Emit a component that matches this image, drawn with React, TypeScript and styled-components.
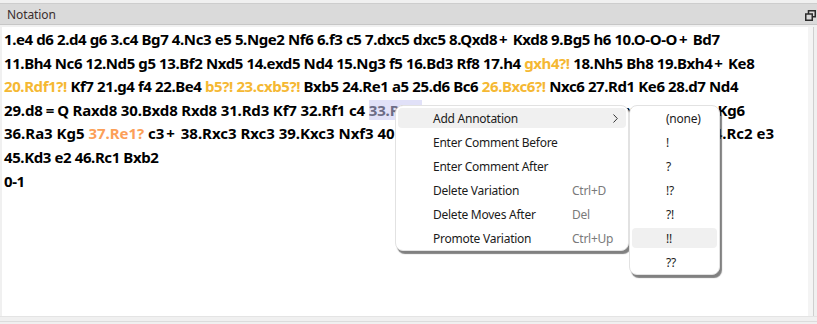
import styled, { createGlobalStyle } from "styled-components";
import { Fragment } from "react";

const GlobalStyle = createGlobalStyle`
  html, body {
    margin: 0;
    padding: 0;
    background: #f0f0f0;
  }
  body {
    font-family: "Noto Sans", "Open Sans", sans-serif;
  }
`;

const Panel = styled.div`
  position: relative;
  width: 817px;
  height: 324px;
  display: flex;
  flex-direction: column;
  background: #f0f0f0;
  overflow: hidden;
`;

const TitleBar = styled.div`
  margin-top: 3px;
  height: 20px;
  background: #dadada;
  border-top: 1px solid #cdcdcd;
  border-bottom: 1px solid #c6c6c6;
  display: flex;
  align-items: center;
  justify-content: space-between;
  padding: 0 1px 0 7px;
`;

const Title = styled.span`
  font-family: "Noto Sans", sans-serif;
  font-size: 12px;
  letter-spacing: -0.1px;
  color: #3b2e2e;
`;

const FloatButton = styled.svg`
  width: 11px;
  height: 11px;
  margin-top: 2px;
`;

const Content = styled.div`
  margin: 2px 3px 0 2px;
  height: 289px;
  background: #fff;
  border-right: 1px solid #cfcfcf;
  position: relative;
  display: flex;
`;

const Moves = styled.div`
  flex: 1;
  padding: 1px 0 0 2px;
`;

const ScrollStrip = styled.div`
  width: 5px;
  background: #f4f4f4;
`;

const Line = styled.div<{ $tracking?: number }>`
  font-family: "Noto Sans", sans-serif;
  font-weight: 700;
  font-size: 15px;
  letter-spacing: ${(p) => p.$tracking ?? -0.4}px;
  line-height: 23.6px;
  white-space: nowrap;
  color: #000;
`;

// Segoe-style "+" and "=" sit wider than Noto's
const Sym = styled.span<{ $wide?: boolean }>`
  margin: 0 ${(p) => (p.$wide ? 3 : 2)}px;
`;

const Move = styled.span<{ $tone?: "dubious" | "mistake" | "selected" }>`
  color: ${(p) =>
    p.$tone === "dubious"
      ? "#f5b833"
      : p.$tone === "mistake"
      ? "#fc9f58"
      : p.$tone === "selected"
      ? "#6c6c86"
      : "#000"};
  background: ${(p) => (p.$tone === "selected" ? "#e1e1f8" : "transparent")};
`;

const Footer = styled.div`
  flex: 1;
  border-top: 1px solid #e4e4e4;
  background: #f0f0f0;
  position: relative;
  &::after {
    content: "";
    position: absolute;
    left: 0;
    right: 0;
    top: 4px;
    border-top: 1px solid #dcdcdc;
  }
`;

const Menu = styled.div<{ $left: number; $top: number; $width: number }>`
  position: absolute;
  left: ${(p) => p.$left}px;
  top: ${(p) => p.$top}px;
  width: ${(p) => p.$width}px;
  box-sizing: border-box;
  padding: 2px 2px;
  background: #fff;
  border: 1px solid #e2e2e2;
  border-radius: 8px;
  box-shadow: 2px 3px 1px rgba(60, 60, 60, 0.65);
  display: flex;
  flex-direction: column;
  gap: 4px;
  font-family: "Noto Sans", sans-serif;
  font-size: 12px;
  letter-spacing: -0.25px;
  color: #1b1b1b;
`;

const Item = styled.div<{ $active?: boolean; $indent: number }>`
  height: 20px;
  display: flex;
  align-items: center;
  padding-left: ${(p) => p.$indent}px;
  border-radius: 4px;
  background: ${(p) => (p.$active ? "#f0f0f0" : "transparent")};
  position: relative;
`;

const Label = styled.span`
  width: 139px;
`;

const Shortcut = styled.span`
  color: #7a7a7a;
`;

const Arrow = styled.svg`
  position: absolute;
  right: 8px;
  top: 6px;
  width: 5px;
  height: 9px;
`;

const menuItems = [
  { label: "Add Annotation", shortcut: "", sub: true },
  { label: "Enter Comment Before", shortcut: "" },
  { label: "Enter Comment After", shortcut: "" },
  { label: "Delete Variation", shortcut: "Ctrl+D" },
  { label: "Delete Moves After", shortcut: "Del" },
  { label: "Promote Variation", shortcut: "Ctrl+Up" },
];

const annotations = ["(none)", "!", "?", "!?", "?!", "!!", "??"];

function san(text: string) {
  return text.split(/([+=])/).map((part, i) =>
    part === "+" || part === "=" ? (
      <Sym key={i} $wide={part === "="}>
        {part}
      </Sym>
    ) : (
      <Fragment key={i}>{part}</Fragment>
    )
  );
}

export default function App() {
  return (
    <Panel>
      <GlobalStyle />
      <TitleBar>
        <Title>Notation</Title>
        <FloatButton viewBox="0 0 11 11">
          <rect x="3.5" y="0.75" width="6.75" height="6" fill="none" stroke="#2b2b2b" strokeWidth="1.5" />
          <rect x="0.75" y="4" width="6.5" height="6.25" fill="#dadada" stroke="#2b2b2b" strokeWidth="1.5" />
        </FloatButton>
      </TitleBar>
      <Content>
        <Moves>
          <Line>
            {san("1.e4 d6 2.d4 g6 3.c4 Bg7 4.Nc3 e5 5.Nge2 Nf6 6.f3 c5 7.dxc5 dxc5 8.Qxd8+ Kxd8 9.Bg5 h6 10.O-O-O+ Bd7")}
          </Line>
          <Line>
            {san("11.Bh4 Nc6 12.Nd5 g5 13.Bf2 Nxd5 14.exd5 Nd4 15.Ng3 f5 16.Bd3 Rf8 17.h4 ")}
            <Move $tone="dubious">gxh4?!</Move>
            {san(" 18.Nh5 Bh8 19.Bxh4+ Ke8")}
          </Line>
          <Line>
            <Move $tone="dubious">20.Rdf1?!</Move> Kf7 21.g4 f4 22.Be4 <Move $tone="dubious">b5?!</Move>{" "}
            <Move $tone="dubious">23.cxb5?!</Move> Bxb5 24.Re1 a5 25.d6 Bc6 <Move $tone="dubious">26.Bxc6?!</Move> Nxc6
            27.Rd1 Ke6 28.d7 Nd4
          </Line>
          <Line $tracking={-0.15}>
            {san("29.d8=Q Raxd8 30.Bxd8 Rxd8 31.Rd3 Kf7 32.Rf1 c4 ")}
            <Move $tone="selected">33.Rfe3</Move>
            {san(" Ndxf3+ 34.Rxf3 Rxd3+ 35.Bxd3?! Nxf4+ Kg6")}
          </Line>
          <Line $tracking={-0.02}>
            36.Ra3 Kg5 <Move $tone="mistake">37.Re1?</Move>
            {san(" c3+ 38.Rxc3 Rxc3 39.Kxc3 Nxf3 40.Re3 Nxd4 41.Kd2 f3 42.Rxc3 h5 43.a4 Kxf4 44.Rc2 e3")}
          </Line>
          <Line>45.Kd3 e2 46.Rc1 Bxb2</Line>
          <Line>0-1</Line>
        </Moves>
        <ScrollStrip />
      </Content>
      <Footer />

      <Menu $left={395} $top={105} $width={234}>
        {menuItems.map((m, i) => (
          <Item key={m.label} $active={i === 0} $indent={35}>
            <Label>{m.label}</Label>
            {m.shortcut && <Shortcut>{m.shortcut}</Shortcut>}
            {m.sub && (
              <Arrow viewBox="0 0 5 9">
                <path d="M0.5 0.5 L4.3 4.5 L0.5 8.5" fill="none" stroke="#333" strokeWidth="1" />
              </Arrow>
            )}
          </Item>
        ))}
      </Menu>

      <Menu $left={629} $top={105} $width={91}>
        {annotations.map((a) => (
          <Item key={a} $active={a === "!!"} $indent={34}>
            {a}
          </Item>
        ))}
      </Menu>
    </Panel>
  );
}
